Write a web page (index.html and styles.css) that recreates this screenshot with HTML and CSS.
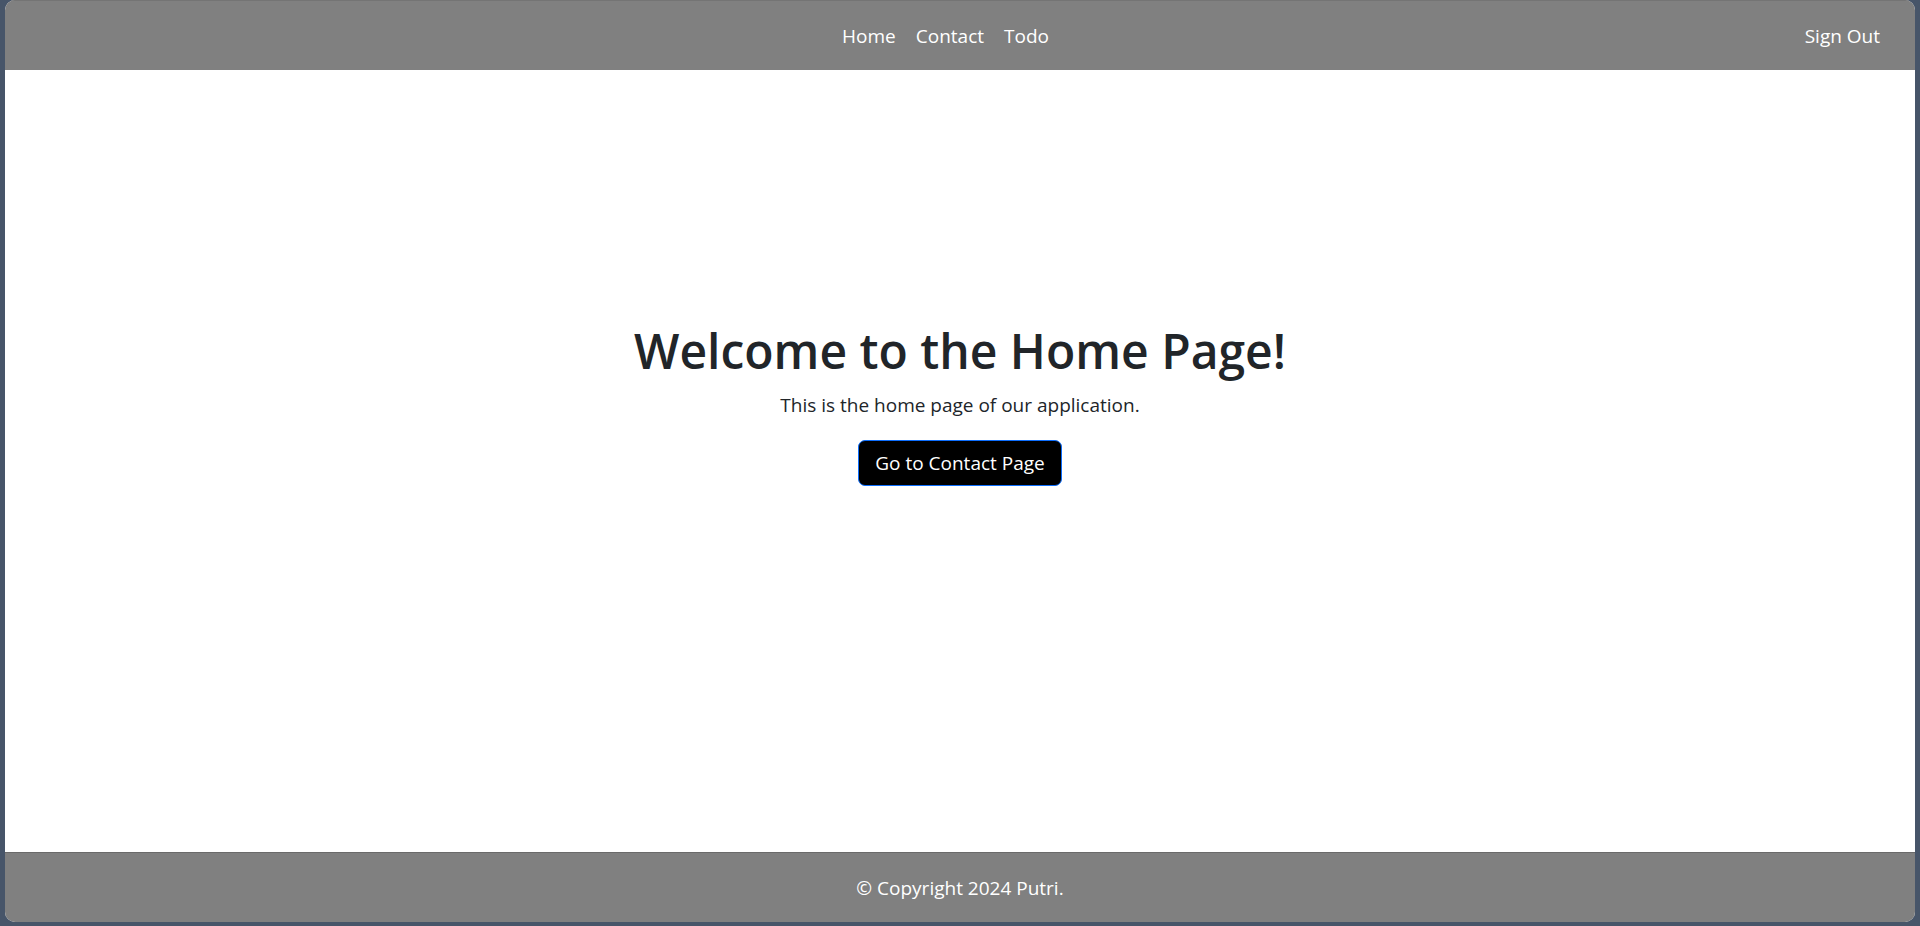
FILE: index.html
```html
<!DOCTYPE html>
<html lang="en">
<head>
<meta charset="utf-8">
<title>Home</title>
<link rel="stylesheet" href="styles.css">
</head>
<body>
<div class="app">
  <header class="topbar">
    <div class="side"></div>
    <nav class="nav">
      <a class="nav-link" href="#">Home</a>
      <a class="nav-link" href="#">Contact</a>
      <a class="nav-link" href="#">Todo</a>
    </nav>
    <div class="side side-right">
      <a class="nav-link" href="#">Sign Out</a>
    </div>
  </header>
  <main class="main">
    <h1 class="title">Welcome to the Home Page!</h1>
    <p class="lead">This is the home page of our application.</p>
    <button class="btn" type="button">Go to Contact Page</button>
  </main>
  <footer class="footer">© Copyright 2024 Putri.</footer>
</div>
</body>
</html>
```
FILE: styles.css
```css
html, body {
  margin: 0;
  padding: 0;
  height: 100%;
}
body {
  background: #475569;
  font-family: "Open Sans", "Noto Sans", sans-serif;
  color: #212529;
}
.app {
  box-sizing: border-box;
  height: 922px;
  margin: 0 5px;
  background: #ffffff;
  border-radius: 10px;
  overflow: hidden;
  display: flex;
  flex-direction: column;
}
.topbar {
  box-sizing: border-box;
  height: 70px;
  flex: 0 0 70px;
  background: #808080;
  border-top: 1px solid #747474;
  display: flex;
  align-items: center;
  padding: 0 35px 0 6px;
}
.side {
  flex: 1 1 0;
}
.side-right {
  display: flex;
  justify-content: flex-end;
}
.nav {
  display: flex;
  gap: 20px;
}
.nav-link {
  color: #ffffff;
  text-decoration: none;
  font-size: 19px;
  line-height: 28px;
}
.main {
  flex: 1 1 auto;
  display: flex;
  flex-direction: column;
  align-items: center;
  padding-top: 252px;
}
.title {
  margin: 0 0 10px;
  font-size: 48px;
  font-weight: 600;
  line-height: 1.2;
}
.lead {
  margin: 0 0 20px;
  font-size: 19px;
  line-height: 30px;
}
.btn {
  box-sizing: border-box;
  height: 46px;
  padding: 0 16px;
  background: #000000;
  color: #ffffff;
  border: 1px solid #0d6efd;
  border-radius: 7px;
  font-family: inherit;
  font-size: 19px;
  line-height: 28px;
  cursor: pointer;
}
.footer {
  box-sizing: border-box;
  flex: 0 0 70px;
  height: 70px;
  background: #808080;
  border-top: 1px solid #6a6a6a;
  color: #ffffff;
  font-size: 19px;
  display: flex;
  align-items: center;
  justify-content: center;
  padding-top: 1px;
}
```
